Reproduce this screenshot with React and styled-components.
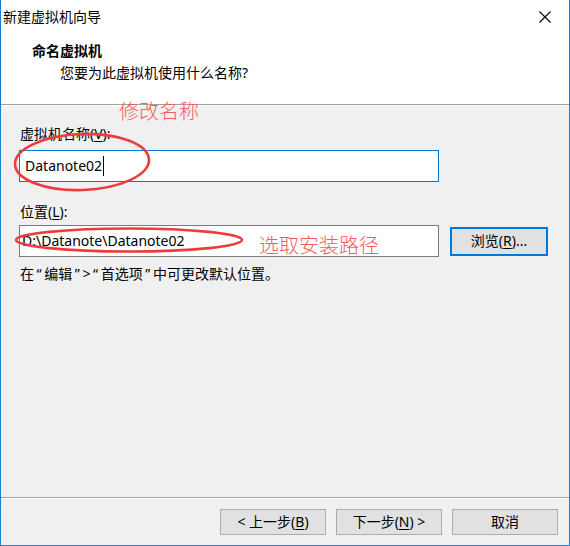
import React from "react";
import styled, { createGlobalStyle } from "styled-components";

const GlobalStyle = createGlobalStyle`
  html, body {
    margin: 0;
    padding: 0;
    background: #ffffff;
  }
  body {
    font-family: "Noto Sans", "Noto Sans CJK SC", sans-serif;
    font-size: 14px;
    color: #000;
  }
`;

const ACCENT = "#1a7fd4";
const RED = "#ee3b3b";

const Window = styled.div`
  position: relative;
  width: 570px;
  height: 546px;
  box-sizing: border-box;
  border: 1px solid ${ACCENT};
  border-top: none;
  display: flex;
  flex-direction: column;
  background: #f0f0f0;
  overflow: hidden;
`;

const Header = styled.div`
  height: 105px;
  box-sizing: border-box;
  background: #fff;
  border-bottom: 1px solid #a0a0a0;
`;

const TitleBar = styled.div`
  height: 32px;
  display: flex;
  align-items: center;
  justify-content: space-between;
  padding: 1px 0 0 2px;
  box-sizing: border-box;
  line-height: 20px;
`;

const CloseButton = styled.div`
  width: 46px;
  height: 32px;
  margin-right: 1px;
  display: flex;
  align-items: center;
  justify-content: center;
`;

const HeaderText = styled.div`
  padding: 8px 0 0 31px;
`;

const Heading = styled.div`
  font-weight: 700;
  line-height: 22px;
`;

const Subtitle = styled.div`
  line-height: 22px;
  padding-left: 28px;
`;

const Body = styled.div`
  flex: 1;
  padding: 0 0 0 18px;
  border-top: 1px solid #fff;
  box-sizing: border-box;
`;

const Label = styled.div`
  line-height: 20px;
  margin-top: ${({ $top }) => $top}px;
  margin-left: 1px;
  margin-bottom: ${({ $gap }) => $gap}px;
`;

const Row = styled.div`
  display: flex;
  align-items: center;
  gap: 11px;
`;

const Field = styled.div`
  width: 420px;
  height: 32px;
  box-sizing: border-box;
  background: #fff;
  border: 1px solid ${({ $focused }) => ($focused ? "#0078d7" : "#7a7a7a")};
  display: flex;
  align-items: center;
  padding-left: ${({ $pad }) => $pad}px;
  line-height: 20px;
  white-space: nowrap;
`;

const Caret = styled.span`
  display: inline-block;
  width: 1px;
  height: 20px;
  background: #000;
  margin-left: 1px;
`;

const Button = styled.div`
  width: ${({ $w }) => $w || 106}px;
  height: ${({ $h }) => $h || 26}px;
  box-sizing: border-box;
  background: #e1e1e1;
  border: ${({ $default }) =>
    $default ? "2px solid #0078d7" : "1px solid #adadad"};
  display: flex;
  align-items: center;
  justify-content: center;
  line-height: 20px;
  white-space: pre;
`;

const Hint = styled.div`
  line-height: 20px;
  margin-top: 7px;
  margin-left: 1px;
`;

// YaHei draws these quotes with a little air around them
const Q = styled.span`
  margin: 0 2.6px;
`;

const Footer = styled.div`
  height: 48px;
  box-sizing: border-box;
  border-top: 1px solid #a0a0a0;
  box-shadow: inset 0 1px 0 #fff;
  display: flex;
  justify-content: flex-end;
  gap: 10px;
  padding: 11px 11px 0 0;
`;

const Note = styled.div`
  position: absolute;
  left: ${({ $x }) => $x}px;
  top: ${({ $y }) => $y}px;
  font-family: "Noto Sans CJK SC", sans-serif;
  font-size: 20px;
  font-weight: 300;
  line-height: 20px;
  color: #f75c5c;
  white-space: nowrap;
`;

const Marks = styled.svg`
  position: absolute;
  left: 0;
  top: 0;
  pointer-events: none;
`;

const U = styled.span`
  text-decoration: underline;
  text-underline-offset: 2px;
`;

export default function App() {
  return (
    <>
      <GlobalStyle />
      <Window>
        <Header>
          <TitleBar>
            <span>新建虚拟机向导</span>
            <CloseButton>
              <svg width="12" height="12" viewBox="0 0 12 12">
                <path d="M0.5 0.5 L11.5 11.5 M11.5 0.5 L0.5 11.5" stroke="#000" strokeWidth="1.1" />
              </svg>
            </CloseButton>
          </TitleBar>
          <HeaderText>
            <Heading>命名虚拟机</Heading>
            <Subtitle>您要为此虚拟机使用什么名称?</Subtitle>
          </HeaderText>
        </Header>

        <Body>
          <Label $top={18} $gap={6}>
            虚拟机名称(<U>V</U>):
          </Label>
          <Field $focused $pad={5}>
            Datanote02
            <Caret />
          </Field>

          <Label $top={20} $gap={3}>
            位置(<U>L</U>):
          </Label>
          <Row>
            <Field $pad={2}>D:\Datanote\Datanote02</Field>
            <Button $default $w={98} $h={29}>
              浏览(<U>R</U>)...
            </Button>
          </Row>
          <Hint>
            在<Q>“</Q>编辑<Q>”</Q>&gt;<Q>“</Q>首选项<Q>”</Q>中可更改默认位置。
          </Hint>
        </Body>

        <Footer>
          <Button>
            {"< 上一步("}
            <U>B</U>)
          </Button>
          <Button>
            下一步(<U>N</U>
            {") >"}
          </Button>
          <Button>取消</Button>
        </Footer>

        <Note $x={118} $y={101}>修改名称</Note>
        <Note $x={258} $y={235}>选取安装路径</Note>

        <Marks width="570" height="546">
          <ellipse cx="81" cy="162" rx="67" ry="28" fill="none" stroke={RED} strokeWidth="2.6" transform="rotate(-2 81 162)" />
          <ellipse cx="128" cy="240" rx="113" ry="11.5" fill="none" stroke={RED} strokeWidth="2.6" />
        </Marks>
      </Window>
    </>
  );
}
